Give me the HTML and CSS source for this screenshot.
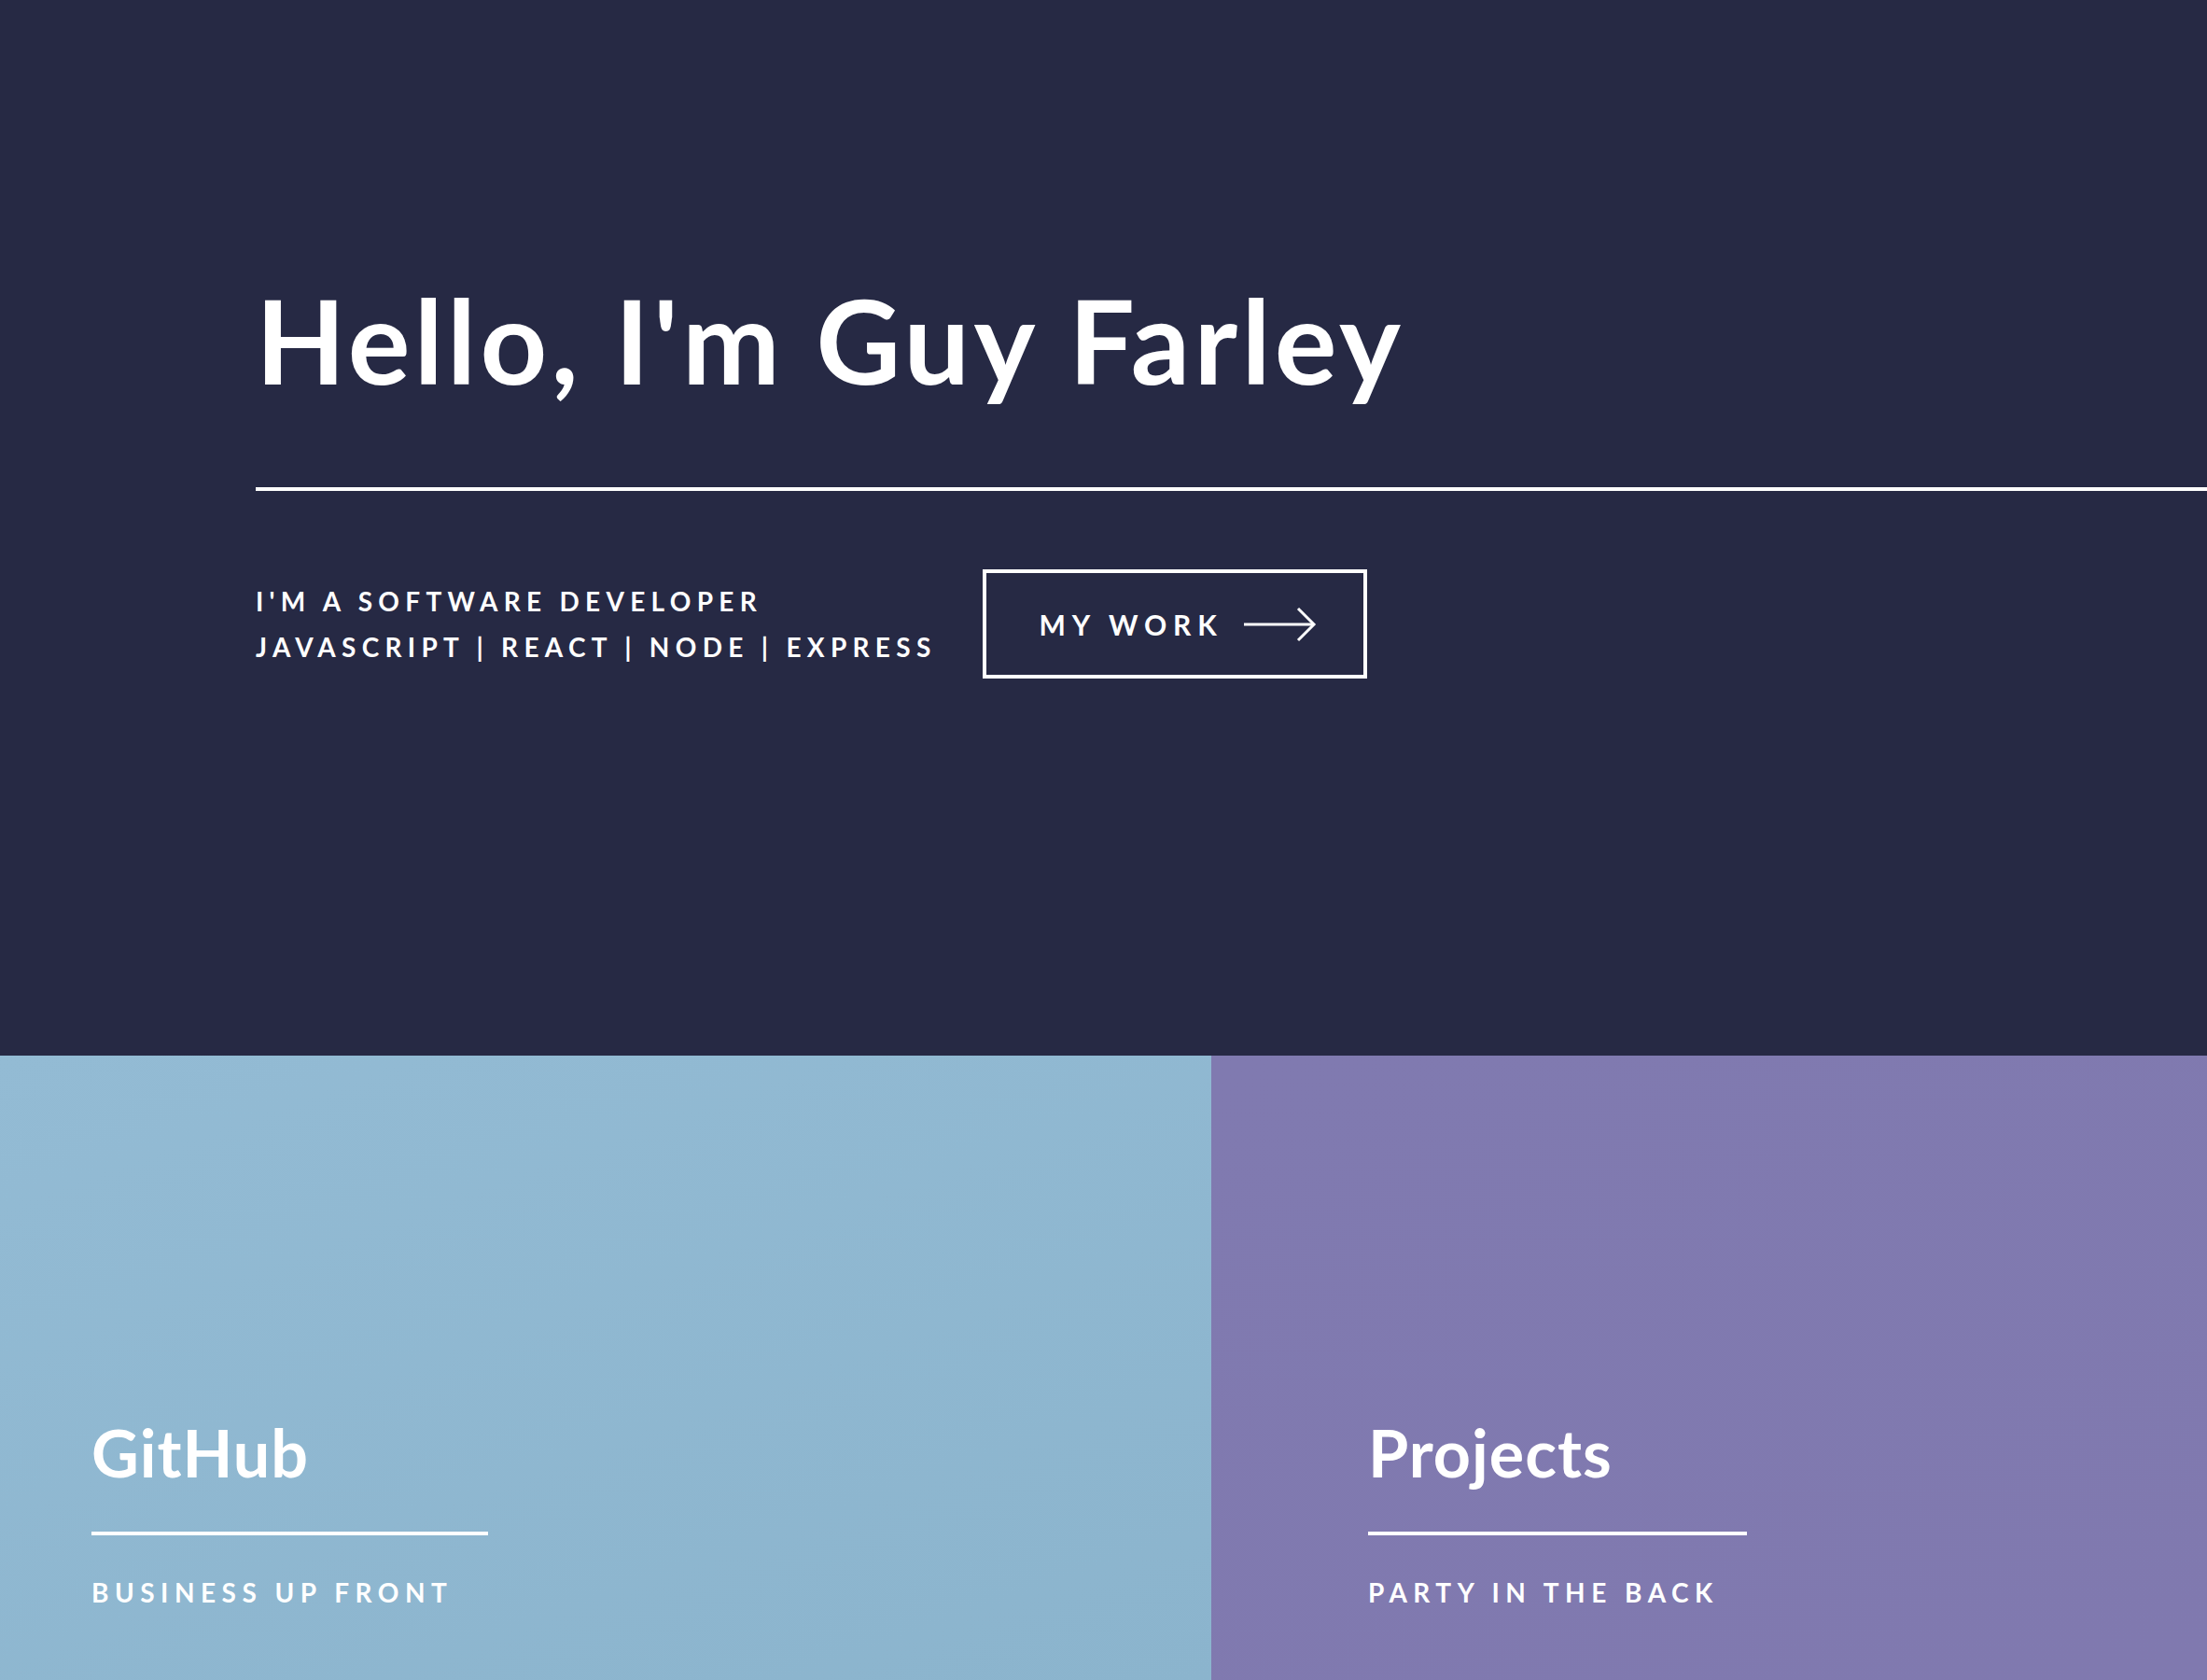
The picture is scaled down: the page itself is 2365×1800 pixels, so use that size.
FILE: index.html
```html
<!DOCTYPE html>
<html lang="en">
<head>
<meta charset="utf-8">
<title>Guy Farley</title>
<link rel="stylesheet" href="styles.css">
</head>
<body>
<section class="hero">
  <h1 class="hero-title">Hello, I'm Guy Farley</h1>
  <div class="hero-rule"></div>
  <div class="hero-row">
    <div class="hero-tagline">
      <p>I'M A SOFTWARE DEVELOPER</p>
      <p>JAVASCRIPT | REACT | NODE | EXPRESS</p>
    </div>
    <a class="btn" href="#">
      <span class="btn-label">MY WORK</span>
      <svg class="btn-arrow" width="78" height="38" viewBox="0 0 78 38" fill="none" stroke="#fff" stroke-width="3">
        <line x1="0" y1="19" x2="75" y2="19"/>
        <polyline points="58,2 75,19 58,36"/>
      </svg>
    </a>
  </div>
</section>
<section class="panels">
  <a class="panel panel-github" href="#">
    <div class="panel-inner panel-inner-github">
      <h2 class="panel-title">GitHub</h2>
      <div class="panel-rule panel-rule-github"></div>
      <p class="panel-sub">BUSINESS UP FRONT</p>
    </div>
  </a>
  <a class="panel panel-projects" href="#">
    <div class="panel-inner panel-inner-projects">
      <h2 class="panel-title">Projects</h2>
      <div class="panel-rule panel-rule-projects"></div>
      <p class="panel-sub">PARTY IN THE BACK</p>
    </div>
  </a>
</section>
</body>
</html>
```
FILE: styles.css
```css
* { box-sizing: border-box; }
html, body { margin: 0; padding: 0; }
body {
  font-family: "Lato", "Open Sans", sans-serif;
  color: #fff;
  background: #262944;
  overflow: hidden;
}
.hero {
  height: 1131px;
  background: #262944;
  padding: 302px 0 0 274px;
}
.hero-title {
  margin: 0;
  font-size: 125px;
  line-height: 125px;
  font-weight: 700;
  letter-spacing: 4.3px;
}
.hero-rule {
  margin-top: 95px;
  height: 4px;
  background: #fff;
}
.hero-row {
  margin-top: 84px;
  display: flex;
  align-items: center;
  gap: 49px;
}
.hero-tagline p {
  margin: 0;
  font-size: 28px;
  line-height: 49px;
  font-weight: 700;
  letter-spacing: 6.3px;
}
.btn {
  display: flex;
  align-items: center;
  height: 117px;
  border: 4px solid #fff;
  padding: 0 50px 0 57px;
  color: #fff;
  text-decoration: none;
}
.btn-label {
  font-size: 30px;
  font-weight: 700;
  letter-spacing: 6.9px;
  margin-right: 22px;
}
.btn-arrow { display: block; }
.panels {
  display: grid;
  grid-template-columns: 1298px 1fr;
  height: 669px;
}
.panel {
  display: flex;
  flex-direction: column;
  justify-content: flex-end;
  color: #fff;
  text-decoration: none;
  padding-bottom: 80px;
}
.panel-github { background: linear-gradient(160deg, #93bbd4 0%, #8bb4cd 100%); }
.panel-projects { background: linear-gradient(160deg, #807ab0 0%, #8079af 100%); }
.panel-inner-github { padding-left: 98px; }
.panel-inner-projects { padding-left: 168px; }
.panel-title {
  margin: 0;
  font-size: 70px;
  line-height: 70px;
  font-weight: 700;
  letter-spacing: 1px;
}
.panel-rule {
  margin-top: 50px;
  height: 4px;
  background: #fff;
}
.panel-rule-github { width: 425px; }
.panel-rule-projects { width: 406px; }
.panel-sub {
  margin: 47px 0 0;
  font-size: 28px;
  line-height: 28px;
  font-weight: 700;
  letter-spacing: 6.5px;
}
```
